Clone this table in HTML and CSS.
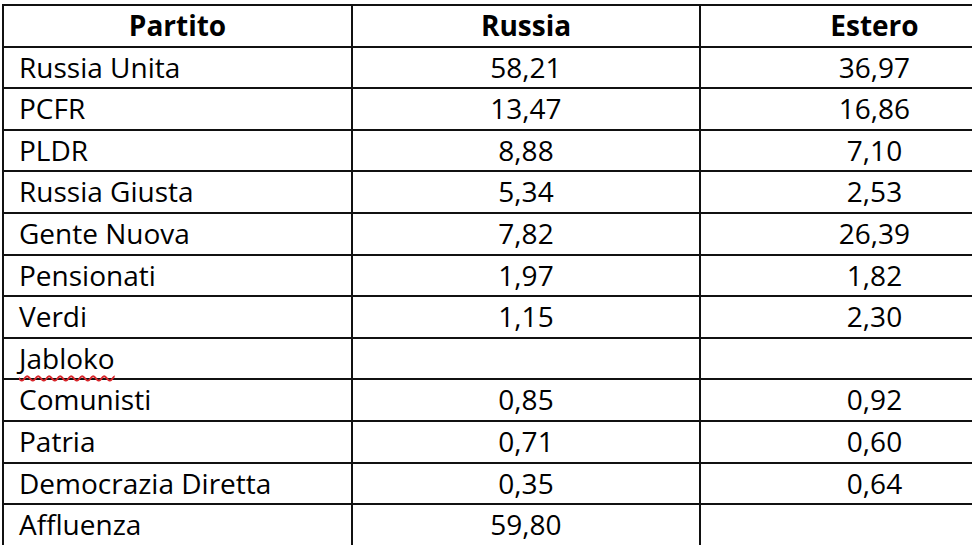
FILE: index.html
```html
<!DOCTYPE html>
<html lang="it">
<head>
<meta charset="utf-8">
<title>Risultati</title>
<link rel="stylesheet" href="styles.css">
</head>
<body>
<table class="results">
  <colgroup>
    <col class="c1">
    <col class="c2">
    <col class="c3">
  </colgroup>
  <thead>
    <tr><th>Partito</th><th>Russia</th><th class="ext">Estero</th></tr>
  </thead>
  <tbody>
    <tr><td class="name">Russia Unita</td><td>58,21</td><td class="ext">36,97</td></tr>
    <tr><td class="name">PCFR</td><td>13,47</td><td class="ext">16,86</td></tr>
    <tr><td class="name">PLDR</td><td>8,88</td><td class="ext">7,10</td></tr>
    <tr><td class="name">Russia Giusta</td><td>5,34</td><td class="ext">2,53</td></tr>
    <tr><td class="name">Gente Nuova</td><td>7,82</td><td class="ext">26,39</td></tr>
    <tr><td class="name">Pensionati</td><td>1,97</td><td class="ext">1,82</td></tr>
    <tr><td class="name">Verdi</td><td>1,15</td><td class="ext">2,30</td></tr>
    <tr><td class="name"><span class="spell">Jabloko</span></td><td></td><td class="ext"></td></tr>
    <tr><td class="name">Comunisti</td><td>0,85</td><td class="ext">0,92</td></tr>
    <tr><td class="name">Patria</td><td>0,71</td><td class="ext">0,60</td></tr>
    <tr><td class="name">Democrazia Diretta</td><td>0,35</td><td class="ext">0,64</td></tr>
    <tr class="last"><td class="name">Affluenza</td><td>59,80</td><td class="ext"></td></tr>
  </tbody>
</table>
</body>
</html>
```
FILE: styles.css
```css
html, body {
  margin: 0;
  padding: 0;
  overflow: hidden;
  background: #ffffff;
}

body {
  width: 972px;
  height: 547px;
}

.results {
  margin: 4px 0 0 2px;
  border-collapse: collapse;
  table-layout: fixed;
  width: 970px;
  font-family: "Open Sans", "Noto Sans", sans-serif;
  font-size: 28px;
  color: #000;
}

.c1 { width: 349px; }
.c2 { width: 348px; }
.c3 { width: 273px; }

.results th,
.results td {
  border: 2px solid #111;
  padding: 0 4px;
  height: 39.6px;
  line-height: 39.6px;
  text-align: center;
  white-space: nowrap;
  vertical-align: middle;
}

.results th {
  font-weight: 700;
}

.results td.name {
  text-align: left;
  padding-left: 15px;
}

.results .ext {
  border-right: none;
  padding-left: 75px;
  padding-right: 0;
}

.results tr.last td {
  border-bottom: none;
}

.spell {
  text-decoration: underline wavy #d9262b;
  text-decoration-thickness: 1.5px;
  text-underline-offset: 6px;
}
```
